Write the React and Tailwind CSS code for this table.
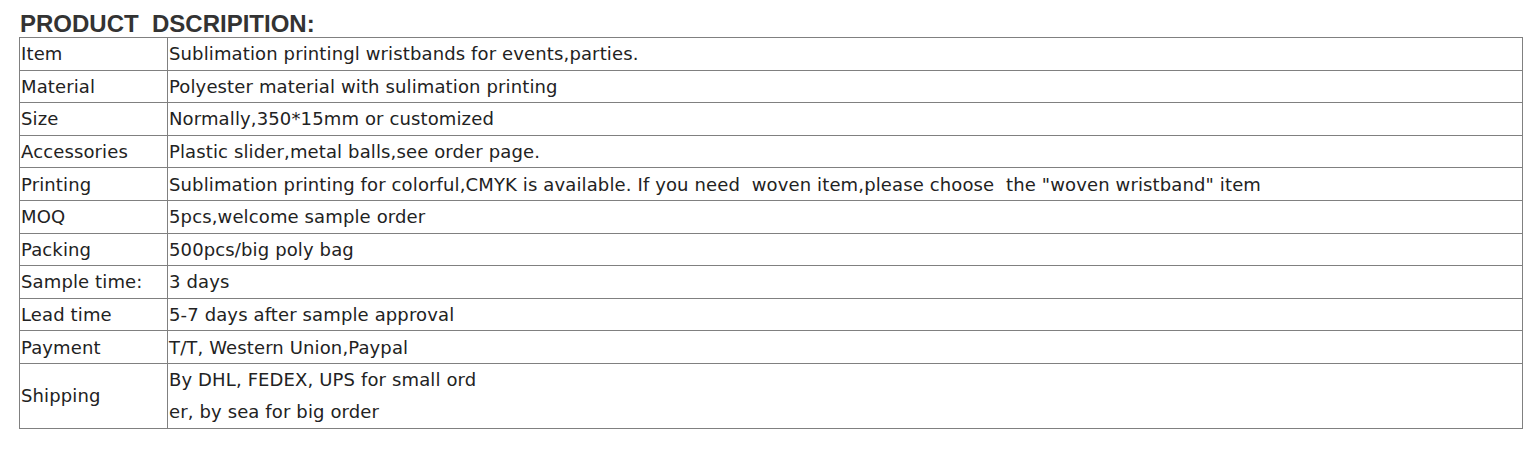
export default function App() {
  const rows = [
    ["Item", "Sublimation printingl wristbands for events,parties."],
    ["Material", "Polyester material with sulimation printing"],
    ["Size", "Normally,350*15mm or customized"],
    ["Accessories", "Plastic slider,metal balls,see order page."],
    ["Printing", 'Sublimation printing for colorful,CMYK is available. If you need  woven item,please choose  the "woven wristband" item'],
    ["MOQ", "5pcs,welcome sample order"],
    ["Packing", "500pcs/big poly bag"],
    ["Sample time:", "3 days"],
    ["Lead time", "5-7 days after sample approval"],
    ["Payment", "T/T, Western Union,Paypal"],
  ];
  return (
    <div className="bg-white w-[1533px] h-[450px] pl-[19px] pt-[10px]">
      <div className="font-['Liberation_Sans',Arial,sans-serif] font-bold text-[24px] leading-[27px] text-[#333] whitespace-pre pl-[1px]">
        {"PRODUCT  DSCRIPITION:"}
      </div>
      <table className="border-collapse w-[1504px] font-['DejaVu_Sans',sans-serif] text-[18px] tracking-[0.13px] text-[#222] whitespace-pre">
        <tbody>
          {rows.map(([k, v]) => (
            <tr key={k} className="h-[32.6px]">
              <td className="border border-[#808080] w-[148px] px-[1px] py-0 leading-[31px] align-middle">{k}</td>
              <td className="border border-[#808080] px-[1px] py-0 leading-[31px] align-middle">{v}</td>
            </tr>
          ))}
          <tr className="h-[65px]">
            <td className="border border-[#808080] w-[148px] px-[1px] py-0 leading-[31px] align-middle">Shipping</td>
            <td className="border border-[#808080] px-[1px] py-0 leading-[31.5px] align-middle">
              By DHL, FEDEX, UPS for small ord
              <br />
              er, by sea for big order
            </td>
          </tr>
        </tbody>
      </table>
    </div>
  );
}
